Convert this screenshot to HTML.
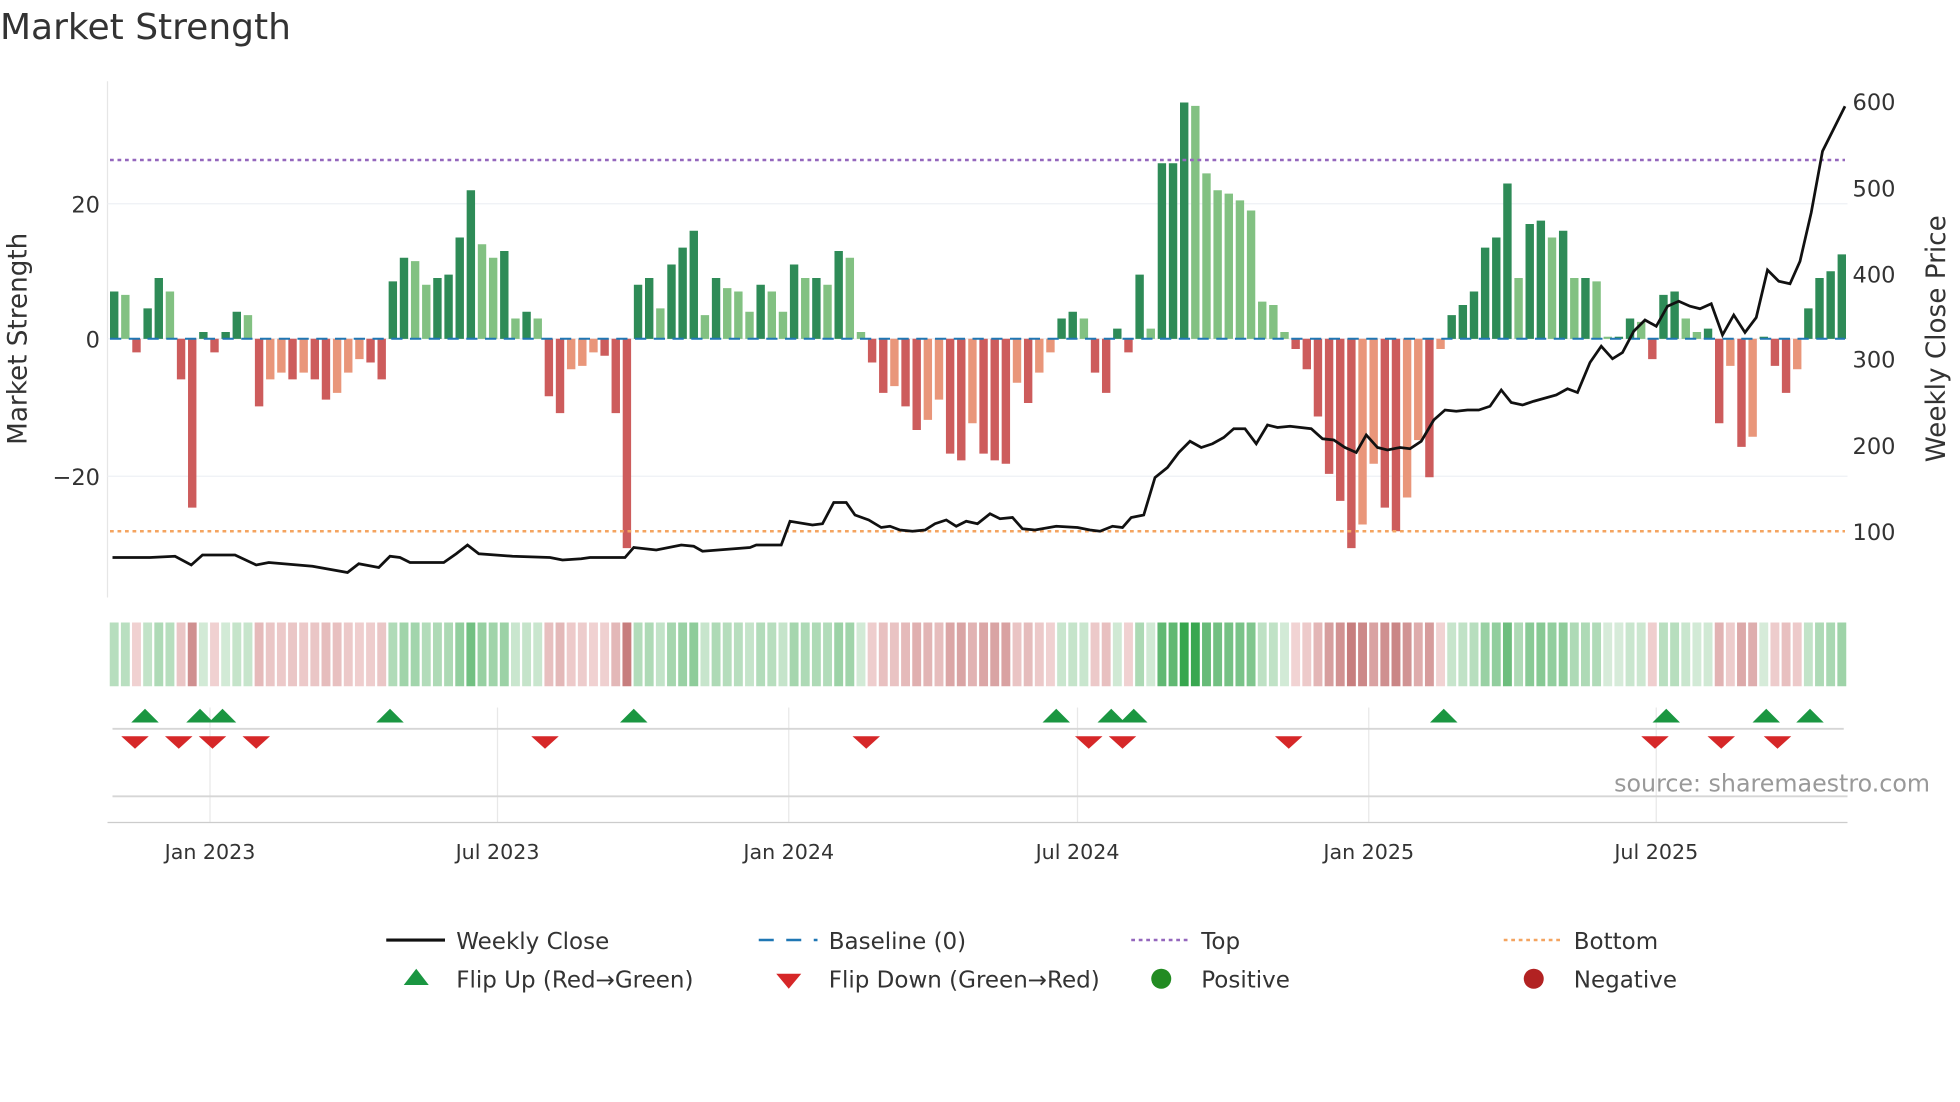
<!DOCTYPE html><html><head><meta charset="utf-8"><style>html,body{margin:0;padding:0;background:#fff;width:1960px;height:1102px;overflow:hidden}svg{display:block}text{font-family:"DejaVu Sans","Liberation Sans",sans-serif}</style></head><body>
<svg id="s" width="1960" height="1102" viewBox="0 0 1568 881.6" xmlns="http://www.w3.org/2000/svg">
<text x="0" y="31" font-size="28.8" fill="#333">Market Strength</text>
<line x1="86" y1="65" x2="86" y2="478" stroke="#e6e6e6"/>
<line x1="86" y1="163" x2="1478" y2="163" stroke="#eef0f4"/>
<line x1="86" y1="381" x2="1478" y2="381" stroke="#eef0f4"/>
<line x1="86" y1="271" x2="1478" y2="271" stroke="#eef0f4"/>
<g font-size="18" fill="#333">
<text x="80" y="170" text-anchor="end">20</text>
<text x="80" y="278" text-anchor="end">0</text>
<text x="80" y="388" text-anchor="end">−20</text>
<text x="1482" y="88">600</text><text x="1482" y="157">500</text><text x="1482" y="226">400</text><text x="1482" y="294">300</text><text x="1482" y="363">200</text><text x="1482" y="432">100</text>
</g>
<text transform="translate(21,271) rotate(-90)" font-size="21" fill="#333" text-anchor="middle">Market Strength</text>
<text transform="translate(1556,271) rotate(-90)" font-size="21" fill="#333" text-anchor="middle">Weekly Close Price</text>
<g id="bars"></g>
<line x1="88" y1="271" x2="1476" y2="271" stroke="#1f77b4" stroke-width="1.6" stroke-dasharray="9,6"/>
<line x1="88" y1="128" x2="1476" y2="128" stroke="#9467bd" stroke-width="2" stroke-dasharray="3,3"/>
<line x1="88" y1="425" x2="1476" y2="425" stroke="#f4a460" stroke-width="2" stroke-dasharray="3,3"/>
<polyline id="pl" fill="none" stroke="#111" stroke-width="2.2"/>
<g id="heat"></g>
<g stroke="#e8e8e8"><line x1="168" y1="566" x2="168" y2="658"/><line x1="398" y1="566" x2="398" y2="658"/><line x1="631" y1="566" x2="631" y2="658"/><line x1="862" y1="566" x2="862" y2="658"/><line x1="1095" y1="566" x2="1095" y2="658"/><line x1="1325" y1="566" x2="1325" y2="658"/></g>
<line x1="90" y1="583" x2="1475" y2="583" stroke="#d6d6d6" stroke-width="1.5"/>
<line x1="90" y1="637" x2="1478" y2="637" stroke="#d6d6d6" stroke-width="1.5"/>
<line x1="86" y1="658" x2="1478" y2="658" stroke="#ccc"/>
<g id="mk"></g>
<text x="1544" y="633" font-size="19" fill="#999" text-anchor="end">source: sharemaestro.com</text>
<g font-size="16.5" fill="#333" text-anchor="middle"><text x="168" y="687">Jan 2023</text><text x="398" y="687">Jul 2023</text><text x="631" y="687">Jan 2024</text><text x="862" y="687">Jul 2024</text><text x="1095" y="687">Jan 2025</text><text x="1325" y="687">Jul 2025</text></g>
<g font-size="18.4" fill="#333">
<line x1="309" y1="752" x2="356" y2="752" stroke="#111" stroke-width="2.5"/><text x="365" y="759">Weekly Close</text>
<line x1="607" y1="752" x2="654" y2="752" stroke="#1f77b4" stroke-width="2" stroke-dasharray="12,10"/><text x="663" y="759">Baseline (0)</text>
<line x1="905" y1="752" x2="952" y2="752" stroke="#9467bd" stroke-width="2" stroke-dasharray="3,3"/><text x="961" y="759">Top</text>
<line x1="1203" y1="752" x2="1250" y2="752" stroke="#f4a460" stroke-width="2" stroke-dasharray="3,3"/><text x="1259" y="759">Bottom</text>
<polygon points="323,788 333,775 343,788" fill="#1a9641"/><text x="365" y="790">Flip Up (Red→Green)</text>
<polygon points="621,779 641,779 631,791" fill="#d62728"/><text x="663" y="790">Flip Down (Green→Red)</text>
<circle cx="929" cy="783" r="8" fill="#228b22"/><text x="961" y="790">Positive</text>
<circle cx="1227" cy="783" r="8" fill="#b22222"/><text x="1259" y="790">Negative</text>
</g>
</svg>
<script>
var v=[7,6.5,-2,4.5,9,7,-6,-25,1,-2,1,4,3.5,-10,-6,-5,-6,-5,-6,-9,-8,-5,-3,-3.5,-6,8.5,12,11.5,8,9,9.5,15,22,14,12,13,3,4,3,-8.5,-11,-4.5,-4,-2,-2.5,-11,-31,8,9,4.5,11,13.5,16,3.5,9,7.5,7,4,8,7,4,11,9,9,8,13,12,1,-3.5,-8,-7,-10,-13.5,-12,-9,-17,-18,-12.5,-17,-18,-18.5,-6.5,-9.5,-5,-2,3,4,3,-5,-8,1.5,-2,9.5,1.5,26,26,35,34.5,24.5,22,21.5,20.5,19,5.5,5,1,-1.5,-4.5,-11.5,-20,-24,-31,-27.5,-18.5,-25,-28.5,-23.5,-15,-20.5,-1.5,3.5,5,7,13.5,15,23,9,17,17.5,15,16,9,9,8.5,0.3,0.3,3,2.5,-3,6.5,7,3,1,1.5,-12.5,-4,-16,-14.5,0.3,-4,-8,-4.5,4.5,9,10,12.5];
var ns="http://www.w3.org/2000/svg",b=document.getElementById('bars'),h=document.getElementById('heat');
var x0=87,x1=1478,n=v.length,w=(x1-x0)/n;
function el(t,a,p){var e=document.createElementNS(ns,t);for(var k in a)e.setAttribute(k,a[k]);p.appendChild(e);}
for(var i=0;i<n;i++){var x=x0+i*w,val=v[i],p=i?v[i-1]:0,c;
if(val>=0)c=(val>=p)?'#2e8b57':'#82c182';else c=(val<=p)?'#cd5c5c':'#e9967a';
var y=271-val*5.4;el('rect',{x:x+1,y:Math.min(y,271),width:w-2.2,height:Math.abs(val*5.4)+0.1,fill:c},b);
var t=Math.min(Math.abs(val)/35,1),hc;
if(val>=0)hc='rgb('+Math.round(215-160*t)+','+Math.round(236-70*t)+','+Math.round(218-140*t)+')';else hc='rgb('+Math.round(243-50*t)+','+Math.round(215-100*t)+','+Math.round(215-100*t)+')';
el('rect',{x:x+0.8,y:498,width:w-1.8,height:51,fill:hc},h);}
var pts=[90,446,120,446,140,445,153,452,162,444,188,444,205,452,215,450,250,453,278,458,287,451,303,454,312,445,320,446,328,450,355,450,365,443,374,436,383,443,410,445,440,446,450,448,465,447,472,446,500,446,507,438,525,440,545,436,555,437,562,441,600,438,605,436,625,436,632,417,650,420,658,419,667,402,677,402,684,412,695,416,705,422,712,421,720,424,730,425,740,424,748,419,757,416,765,421,773,417,782,419,792,411,800,415,810,414,818,423,828,424,845,421,862,422,872,424,880,425,890,421,898,422,905,414,915,412,924,382,934,374,943,362,952,353,961,358,970,355,979,350,987,343,996,343,1005,355,1014,340,1022,342,1032,341,1049,343,1058,351,1067,352,1076,358,1085,362,1093,348,1102,358,1110,360,1120,358,1128,359,1137,353,1147,336,1156,328,1165,329,1174,328,1183,328,1192,325,1201,312,1209,322,1218,324,1227,321,1245,316,1254,311,1262,314,1272,290,1281,277,1290,287,1298,282,1307,265,1316,256,1325,261,1334,245,1343,241,1352,245,1360,247,1369,243,1378,268,1387,252,1396,266,1405,254,1414,216,1423,225,1432,227,1440,209,1449,170,1458,121,1467,103,1476,85];
var s='';for(var i=0;i<pts.length;i+=2)s+=pts[i]+','+pts[i+1]+' ';document.getElementById('pl').setAttribute('points',s);
var m=document.getElementById('mk');
[116,160,178,312,507,845,889,907,1155,1333,1413,1448].forEach(function(x){el('polygon',{points:(x-11)+',578 '+x+',567 '+(x+11)+',578',fill:'#1a9641'},m);});
[108,143,170,205,436,693,871,898,1031,1324,1377,1422].forEach(function(x){el('polygon',{points:(x-11)+',589 '+(x+11)+',589 '+x+',599',fill:'#d62728'},m);});
</script>
</body></html>
